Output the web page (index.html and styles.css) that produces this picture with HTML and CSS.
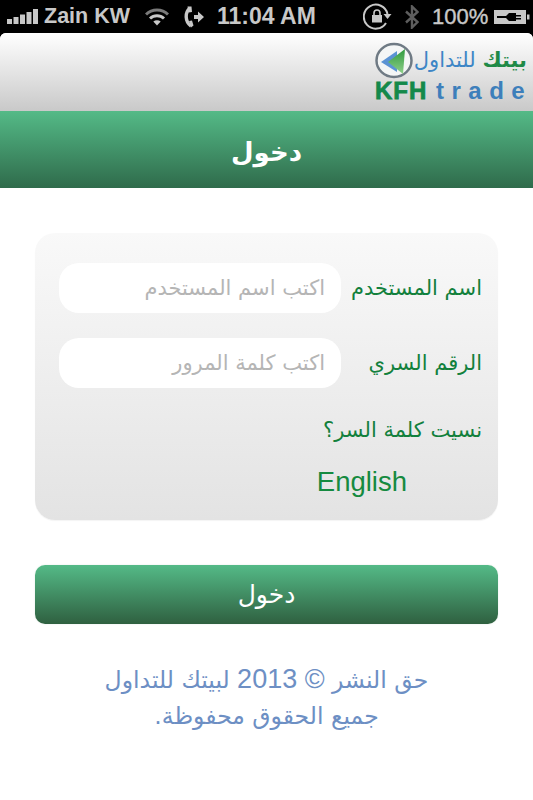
FILE: index.html
```html
<!DOCTYPE html>
<html lang="ar">
<head>
    <meta charset="UTF-8">
    <meta name="viewport" content="width=device-width, initial-scale=1.0">
    <title>KFH trade</title>
    <link rel="stylesheet" href="styles.css">
</head>
<body>
    <div class="status-bar" dir="ltr">
        <svg class="signal" width="31" height="16" viewBox="0 0 31 16">
            <rect x="0" y="10" width="5" height="5" fill="#c8c8c8"/>
            <rect x="6.500" y="8" width="5" height="7" fill="#c8c8c8"/>
            <rect x="13" y="5.500" width="5" height="9.500" fill="#c8c8c8"/>
            <rect x="19.500" y="3" width="5" height="12" fill="#c8c8c8"/>
            <rect x="26" y="0" width="5" height="15" fill="#c8c8c8"/>
        </svg>
        <span class="carrier">Zain KW</span>
        <svg class="wifi" width="24" height="18" viewBox="0 0 24 18">
            <path d="M1 6.500 C7 0.500 17 0.500 23 6.500" fill="none" stroke="#7a7a7a" stroke-width="3"/>
            <path d="M5 10.500 C9 6.800 15 6.800 19 10.500" fill="none" stroke="#c8c8c8" stroke-width="3"/>
            <path d="M12 17.500 L8.300 13.600 C10.500 11.800 13.500 11.800 15.700 13.600 Z" fill="#c8c8c8"/>
        </svg>
        <svg class="call" width="20" height="22" viewBox="0 0 20 22">
            <path d="M6 2 C2.500 5 2 8 2.200 11 C2.400 15 4 18 7 20" fill="none" stroke="#c8c8c8" stroke-width="3.400"/>
            <path d="M3.500 0.500 L7.500 0.500 L8 6 L4.500 6.500 Z M5 15 L8 14.500 L9.500 19.500 L7 21.500 Z" fill="#c8c8c8"/>
            <path d="M10 9 H14 V5.500 L20 11 L14 16.500 V13 H10 Z" fill="#c8c8c8"/>
        </svg>
        <span class="clock">11:04 AM</span>
        <svg class="rotation" width="29" height="28" viewBox="0 0 29 28">
            <path d="M23 20 A12 12 0 1 1 24.500 11" fill="none" stroke="#c8c8c8" stroke-width="2"/>
            <path d="M20.500 11 H28.500 L24.500 16 Z" fill="#c8c8c8"/>
            <path d="M11 12 V10 A3 3 0 0 1 17 10 V12" fill="none" stroke="#c8c8c8" stroke-width="1.600"/>
            <rect x="9" y="12" width="10" height="7.500" fill="#c8c8c8"/>
        </svg>
        <svg class="bluetooth" width="14" height="24" viewBox="0 0 14 24">
            <path d="M1 6.500 L12.500 17 L7 22.500 V1.500 L12.500 7 L1 17.500" fill="none" stroke="#5e5e5e" stroke-width="2.400"/>
        </svg>
        <span class="percent">100%</span>
        <svg class="battery" width="36" height="16" viewBox="0 0 36 16">
            <rect x="0" y="1" width="32" height="14" fill="#c8c8c8"/>
            <rect x="33" y="5.500" width="2.500" height="5" fill="#c8c8c8"/>
            <path d="M3 7 H12 L15 4 H22 V6 H27 V7.500 H22 V9 H27 V10.500 H22 V12 H15 L12 9 H3 Z" fill="#000"/>
        </svg>
    </div>

    <div class="page">
        <div class="brand-bar">
            <div class="logo">
                <div class="logo-top">
                    <span class="logo-arabic"><b>بيتك</b> للتداول</span>
                    <svg class="logo-mark" width="38" height="37" viewBox="0 0 38 37">
                        <defs>
                            <linearGradient id="mark-green" x1="0" y1="0" x2="0" y2="1">
                                <stop offset="0" stop-color="#2f9a3e"/>
                                <stop offset="1" stop-color="#8fd08a"/>
                            </linearGradient>
                        </defs>
                        <ellipse cx="19" cy="18.500" rx="17.500" ry="16.500" fill="#f4f6f6" stroke="#6f7a84" stroke-width="2.500"/>
                        <path d="M6 20 L22 9 L22 30 Z" fill="#5b93d4"/>
                        <path d="M13 20 L30 7 L28 32 Z" fill="url(#mark-green)"/>
                    </svg>
                </div>
                <div class="logo-latin"><span class="logo-kfh">KFH</span> <span class="logo-trade">trade</span></div>
            </div>
        </div>

        <header class="title-bar">
            <h1>دخول</h1>
        </header>

        <main class="content">
            <form class="login-card">
                <div class="field-row">
                    <label class="field-label" for="username">اسم المستخدم</label>
                    <input class="field-input" id="username" type="text" placeholder="اكتب اسم المستخدم">
                </div>
                <div class="field-row">
                    <label class="field-label" for="password">الرقم السري</label>
                    <input class="field-input" id="password" type="text" placeholder="اكتب كلمة المرور">
                </div>
                <a class="forgot-link">نسيت كلمة السر؟</a>
                <a class="lang-link" dir="ltr">English</a>
            </form>

            <button class="login-button" type="button">دخول</button>

            <p class="copyright">حق النشر <span class="copyright-year">© 2013</span> لبيتك للتداول<br>جميع الحقوق محفوظة.</p>
        </main>
    </div>
</body>
</html>
```

FILE: styles.css
```css
* {
    box-sizing: border-box;
}
body {
    margin: 0;
    background-color: #000;
    font-family: "DejaVu Sans", sans-serif;
    direction: rtl;
}
.status-bar {
    height: 33px;
    display: flex;
    align-items: center;
    padding-left: 7px;
    color: #c8c8c8;
    font-family: "Liberation Sans", Arial, sans-serif;
    font-weight: bold;
    font-size: 21.500px;
    direction: ltr;
    overflow: hidden;
}
.carrier {
    margin-left: 6px;
    width: 88px;
    white-space: nowrap;
}
.wifi {
    margin-left: 13px;
}
.call {
    margin-left: 15px;
}
.clock {
    margin-left: 13px;
    width: 103px;
    font-size: 23px;
    white-space: nowrap;
}
.rotation {
    margin-left: 43px;
}
.bluetooth {
    margin-left: 13px;
}
.percent {
    margin-left: 13px;
    width: 60px;
    font-size: 22px;
    font-weight: normal;
    -webkit-text-stroke: 0.4px #c8c8c8;
}
.battery {
    margin-left: 2px;
}
.page {
    height: 767px;
    background-color: #fff;
    border-radius: 6px 6px 0 0;
    overflow: hidden;
}
.brand-bar {
    height: 78px;
    padding: 9px 6px 0 0;
    display: flex;
    justify-content: flex-start;
    background: linear-gradient(#ffffff, #c9c9c9);
}
.logo {
    width: 152px;
}
.logo-top {
    display: flex;
    align-items: center;
    height: 37px;
}
.logo-arabic {
    width: 110px;
    font-size: 21px;
    line-height: 37px;
    color: #3d86c6;
    white-space: nowrap;
    letter-spacing: -1.500px;
}
.logo-arabic b {
    font-weight: bold;
    color: #1f8a47;
}
.logo-mark {
    flex: none;
    margin-right: 4px;
}
.logo-latin {
    direction: ltr;
    font-family: "Liberation Sans", Arial, sans-serif;
    font-weight: bold;
    font-size: 24px;
    line-height: 24px;
    white-space: nowrap;
}
.logo-kfh {
    color: #14894a;
    letter-spacing: 1px;
    -webkit-text-stroke: 0.8px #14894a;
}
.logo-trade {
    margin-left: 2px;
    color: #3d7fbb;
    letter-spacing: 7.500px;
}
.title-bar {
    height: 77px;
    padding-top: 4px;
    display: flex;
    align-items: center;
    justify-content: center;
    background: linear-gradient(#54ba87, #2f6b4b);
}
.title-bar h1 {
    margin: 0;
    color: #fff;
    font-size: 26px;
    font-weight: bold;
}
.content {
    padding: 45px 35px 0;
}
.login-card {
    height: 287px;
    padding: 30px 16px 0 24px;
    display: flex;
    flex-direction: column;
    border-radius: 20px;
    background: linear-gradient(#f9f9f9, #e3e3e3);
    box-shadow: 0 1px 1px #f4f4f4;
}
.field-row {
    height: 50px;
    margin-bottom: 25px;
    display: flex;
    align-items: center;
    justify-content: space-between;
}
.field-label {
    color: #12803c;
    font-size: 21px;
    white-space: nowrap;
}
.field-input {
    width: 282px;
    height: 50px;
    padding: 0 16px;
    border: none;
    border-radius: 20px;
    background-color: #fff;
    font-family: "DejaVu Sans", sans-serif;
    font-size: 21px;
    direction: rtl;
    outline: none;
}
.field-input::placeholder {
    color: #b5b5b5;
    opacity: 1;
}
.forgot-link {
    color: #12803c;
    font-size: 21px;
    line-height: 34px;
}
.lang-link {
    margin-top: 18px;
    margin-right: 75px;
    align-self: flex-start;
    color: #158a40;
    font-family: "Liberation Sans", Arial, sans-serif;
    font-size: 27.500px;
    line-height: 34px;
}
.login-button {
    display: block;
    width: 100%;
    height: 59px;
    margin-top: 45px;
    border: none;
    border-radius: 10px;
    background: linear-gradient(#54ba87, #2f6040);
    box-shadow: 0 0 2px #dfe8e2;
    color: #fff;
    font-family: "DejaVu Sans", sans-serif;
    font-size: 25px;
}
.copyright {
    margin: 38px 0 0;
    text-align: center;
    color: #6d8fc4;
    font-size: 23.500px;
    line-height: 36px;
}
.copyright-year {
    font-family: "Liberation Sans", Arial, sans-serif;
    font-size: 27px;
    line-height: 30px;
}
```
